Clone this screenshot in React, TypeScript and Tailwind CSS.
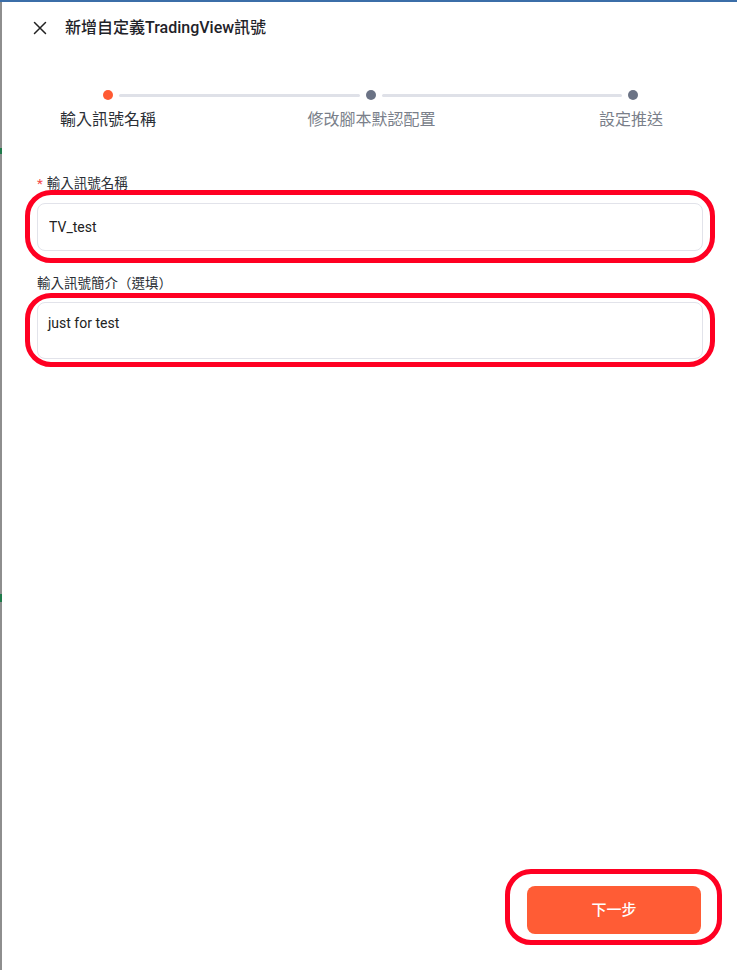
import React from 'react';

const steps = [
  { label: '輸入訊號名稱', active: true },
  { label: '修改腳本默認配置', active: false },
  { label: '設定推送', active: false },
];

// red annotation ring drawn over a field
const Ring = ({ className }: { className: string }) => (
  <div className={`pointer-events-none absolute border-[5px] border-[#ff0022] rounded-[26px] ${className}`} />
);

const App = () => {
  return (
    <div
      className="w-[737px] h-[970px] flex bg-white border-t-2 border-[#3b6ea8] overflow-hidden"
      style={{ fontFamily: 'Roboto, "Noto Sans CJK TC", sans-serif' }}
    >
      {/* edge of the window behind */}
      <div className="w-[2px] h-full bg-[#8e8e8e] flex flex-col">
        <div className="h-[146px]" />
        <div className="h-[6px] bg-[#1f7a4a]" />
        <div className="h-[440px]" />
        <div className="h-[8px] bg-[#1f7a4a]" />
      </div>

      <div className="flex-1 flex flex-col">
        {/* Header */}
        <div className="flex items-center h-[52px] pl-[31px]">
          <svg width="14" height="14" viewBox="0 0 14 14" className="text-[#222]">
            <path d="M1.5 1.5 L12.5 12.5 M12.5 1.5 L1.5 12.5" stroke="currentColor" strokeWidth="1.5" strokeLinecap="round" />
          </svg>
          <h1 className="ml-[18px] text-[16px] font-medium text-[#1f2329]">新增自定義TradingView訊號</h1>
        </div>

        {/* Stepper */}
        <div className="mt-[36px] pl-[101px] pr-[99px] flex items-center">
          {steps.map((s, i) => (
            <React.Fragment key={s.label}>
              <div className={`w-[10px] h-[10px] rounded-full ${s.active ? 'bg-[#ff5a33]' : 'bg-[#6b7385]'}`} />
              {i < steps.length - 1 && <div className="flex-1 h-[3px] mx-[6px] rounded bg-[#dfe1e8]" />}
            </React.Fragment>
          ))}
        </div>
        <div className="mt-[8px] pl-[44px] pr-[44px] flex justify-between">
          {steps.map((s) => (
            <div
              key={s.label}
              className={`w-[124px] text-center text-[16px] whitespace-nowrap ${s.active ? 'text-[#2b2f36]' : 'text-[#7a7f8a]'}`}
            >
              {s.label}
            </div>
          ))}
        </div>

        {/* Form */}
        <div className="mt-[41px] pl-[35px] pr-[34px] flex flex-col">
          <label className="text-[13.5px] leading-[20px] text-[#2b2f36]">
            <span className="text-[#f5484a] mr-[4px]">*</span>輸入訊號名稱
          </label>
          <div className="relative mt-[10px]">
            <input
              readOnly
              value="TV_test"
              className="w-full h-[48px] px-[11px] border border-[#e2e3ea] rounded-[8px] text-[14px] text-[#222] outline-none bg-white"
            />
            <Ring className="-left-[12px] -right-[12px] -top-[13px] -bottom-[12px]" />
          </div>

          <label className="mt-[22px] text-[13.5px] leading-[20px] text-[#2b2f36]">輸入訊號簡介（選填）</label>
          <div className="relative mt-[9px]">
            <textarea
              readOnly
              value="just for test"
              className="block w-full h-[57px] px-[10px] py-[10px] border border-[#e2e3ea] rounded-[8px] text-[14px] text-[#222] outline-none resize-none bg-white"
            />
            <Ring className="-left-[12px] -right-[12px] -top-[9px] -bottom-[8px]" />
          </div>
        </div>

        <div className="flex-1" />

        {/* Footer */}
        <div className="flex justify-end pr-[36px] pb-[36px]">
          <div className="relative">
            <button
              type="button"
              className="w-[174px] h-[48px] rounded-[8px] bg-[#ff5c35] text-white text-[15px] font-medium"
            >
              下一步
            </button>
            <Ring className="-left-[22px] -right-[21px] -top-[17px] -bottom-[11px]" />
          </div>
        </div>
      </div>
    </div>
  );
};

export default App;
